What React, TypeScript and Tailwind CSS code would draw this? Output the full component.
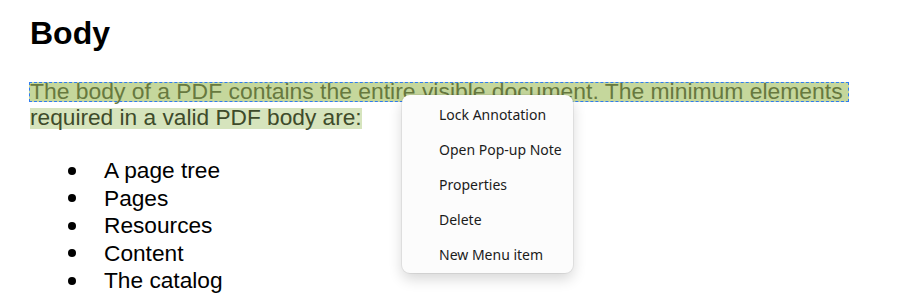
import React from "react";

const items = ["A page tree", "Pages", "Resources", "Content", "The catalog"];
const menu = ["Lock Annotation", "Open Pop-up Note", "Properties", "Delete", "New Menu item"];

export default function App() {
  return (
    <div className="relative w-[907px] h-[307px] bg-white overflow-hidden pl-[29px] pt-[17px] font-['Liberation_Sans',Arial,sans-serif] text-black">
      <h1 className="ml-px h-[32px] text-[32px] leading-[32px] font-bold">Body</h1>
      <div className="mt-[33px] flex flex-col">
        <div className="w-[820px] h-[20px] border border-dashed border-[#2f7cf0] bg-[#c5d79c] text-[#67793f] text-[22.9px] leading-[17px] whitespace-nowrap">
          The body of a PDF contains the entire visible document. The minimum elements
        </div>
        <div className="mt-[6px] ml-px w-[332px] h-[21px] bg-[#d6e4bd] text-[#3e4b2a] text-[22.7px] leading-[19px] whitespace-nowrap">
          required in a valid PDF body are:
        </div>
      </div>
      <ul className="mt-[28px] flex flex-col text-[22.7px] leading-[27.5px]">
        {items.map((t) => (
          <li key={t} className="flex items-center h-[27.5px]">
            <span className="ml-[39px] w-[8px] h-[8px] rounded-full bg-black" />
            <span className="ml-[28px]">{t}</span>
          </li>
        ))}
      </ul>
      <div className="absolute left-[402px] top-[95px] w-[171px] pt-[2px] pb-[1px] rounded-[8px] bg-[#fcfcfc] shadow-[0_0_0_1px_rgba(0,0,0,0.06),0_6px_14px_rgba(0,0,0,0.16)] font-['Noto_Sans',sans-serif] text-[14px] text-[#1b1b1b]">
        {menu.map((m) => (
          <div key={m} className="h-[35px] flex items-center pl-[37px] whitespace-nowrap">
            {m}
          </div>
        ))}
      </div>
    </div>
  );
}
